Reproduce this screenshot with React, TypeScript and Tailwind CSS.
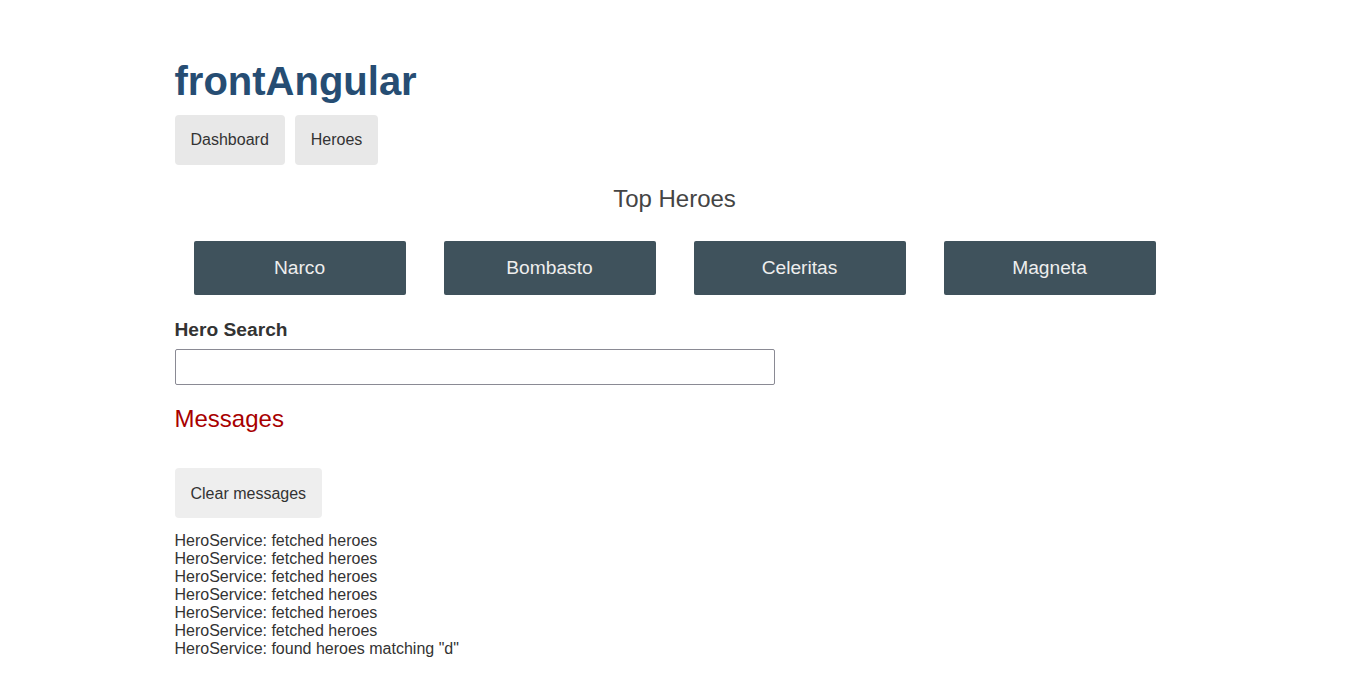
const heroes = ["Narco", "Bombasto", "Celeritas", "Magneta"];

const messages = [
  "HeroService: fetched heroes",
  "HeroService: fetched heroes",
  "HeroService: fetched heroes",
  "HeroService: fetched heroes",
  "HeroService: fetched heroes",
  "HeroService: fetched heroes",
  'HeroService: found heroes matching "d"',
];

export default function App() {
  return (
    <div className="min-h-screen bg-white font-['Liberation_Sans',Arial,sans-serif] text-[#333]">
      <div className="mx-auto w-[1000px] pt-[58px]">
        {/* Header */}
        <h1 className="text-[40px] font-bold leading-[46px] text-[#264d73]">frontAngular</h1>
        <nav className="mt-[11px] flex gap-[10px]">
          <a className="rounded bg-[#e8e8e8] px-4 py-4 text-base leading-[18px] text-[#333]">Dashboard</a>
          <a className="rounded bg-[#e8e8e8] px-4 py-4 text-base leading-[18px] text-[#333]">Heroes</a>
        </nav>

        {/* Dashboard */}
        <h2 className="mt-[20px] text-center text-[24px] leading-[28px] text-[#444]">Top Heroes</h2>
        <div className="mt-[28px] grid grid-cols-4">
          {heroes.map((h) => (
            <div key={h} className="flex justify-center">
              <a className="block w-[212px] rounded-[2px] bg-[#3f525c] py-4 text-center text-[19.2px] leading-[22px] text-[#eee]">
                {h}
              </a>
            </div>
          ))}
        </div>

        {/* Search */}
        <label className="mt-[24px] block text-[19.2px] font-bold leading-[22px] text-[#333]">Hero Search</label>
        <input
          type="text"
          className="mt-[8px] block h-[36px] w-[600px] rounded-[2px] border border-[#8a8a94] px-2 text-base outline-none"
        />

        {/* Messages */}
        <h2 className="mt-[20px] text-[24px] leading-[28px] text-[#a80000]">Messages</h2>
        <button className="mt-[35px] rounded bg-[#eee] px-4 pt-[17px] pb-[15px] text-base leading-[18px] text-[#333]">
          Clear messages
        </button>
        <div className="mt-[14px]">
          {messages.map((m, i) => (
            <div key={i} className="text-base leading-[18px] text-[#333]">
              {m}
            </div>
          ))}
        </div>
      </div>
    </div>
  );
}
